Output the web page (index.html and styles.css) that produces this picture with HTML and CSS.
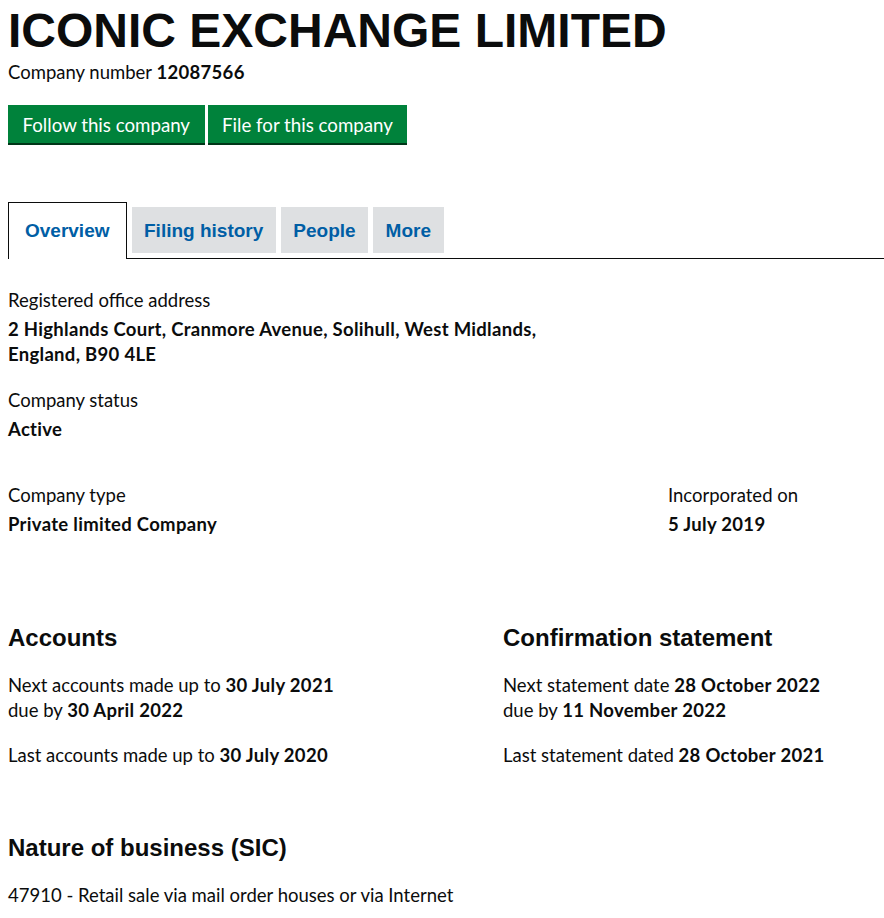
FILE: index.html
```html
<!DOCTYPE html>
<html lang="en">
<head>
<meta charset="utf-8">
<title>ICONIC EXCHANGE LIMITED - Overview</title>
<link rel="stylesheet" href="styles.css">
</head>
<body>
<main class="page">
  <h1 class="title">ICONIC EXCHANGE LIMITED</h1>
  <p class="company-number">Company number <strong>12087566</strong></p>
  <div class="actions">
    <a class="button" href="#">Follow this company</a>
    <a class="button" href="#">File for this company</a>
  </div>

  <nav class="tabs">
    <ul class="tab-list">
      <li class="tab tab-active"><a href="#">Overview</a></li>
      <li class="tab"><a href="#">Filing history</a></li>
      <li class="tab"><a href="#">People</a></li>
      <li class="tab"><a href="#">More</a></li>
    </ul>
  </nav>

  <dl class="facts">
    <dt class="label">Registered office address</dt>
    <dd class="value value-address">2 Highlands Court, Cranmore Avenue, Solihull, West Midlands, England, B90 4LE</dd>
    <dt class="label label-gap">Company status</dt>
    <dd class="value">Active</dd>
  </dl>

  <div class="row row-type">
    <dl class="facts">
      <dt class="label">Company type</dt>
      <dd class="value">Private limited Company</dd>
    </dl>
    <dl class="facts">
      <dt class="label">Incorporated on</dt>
      <dd class="value">5 July 2019</dd>
    </dl>
  </div>

  <div class="row row-dates">
    <section>
      <h2 class="heading">Accounts</h2>
      <p class="text">Next accounts made up to <strong>30 July 2021</strong><br>due by <strong>30 April 2022</strong></p>
      <p class="text text-gap">Last accounts made up to <strong>30 July 2020</strong></p>
    </section>
    <section>
      <h2 class="heading">Confirmation statement</h2>
      <p class="text">Next statement date <strong>28 October 2022</strong><br>due by <strong>11 November 2022</strong></p>
      <p class="text text-gap">Last statement dated <strong>28 October 2021</strong></p>
    </section>
  </div>

  <section class="sic">
    <h2 class="heading">Nature of business (SIC)</h2>
    <p class="text">47910 - Retail sale via mail order houses or via Internet</p>
  </section>
</main>
</body>
</html>
```

FILE: styles.css
```css
* { box-sizing: border-box; }

html, body {
  margin: 0;
  background: #ffffff;
}

body {
  font-family: Lato, "Noto Sans", sans-serif;
  font-size: 18.5px;
  line-height: 25px;
  color: #0b0c0c;
}

.page {
  padding: 4px 8px 0 8px;
}

strong {
  font-weight: 700;
  letter-spacing: 0.3px;
}

.title {
  margin: 0;
  font-family: "Liberation Sans", Arial, sans-serif;
  font-weight: 700;
  font-size: 48px;
  line-height: 54px;
  color: #0b0c0c;
}

.company-number {
  margin: 2px 0 0 0;
}

.actions {
  display: flex;
  gap: 3px;
  margin-top: 20px;
}

.button {
  display: block;
  height: 38px;
  padding: 2px 14.5px 0 14.5px;
  line-height: 36px;
  font-size: 18.7px;
  background: #00823b;
  color: #ffffff;
  text-decoration: none;
  box-shadow: 0 2px 0 #003618;
}

.tabs {
  margin-top: 59px;
  margin-right: -8px;
}

.tab-list {
  list-style: none;
  margin: 0;
  padding: 0;
  display: flex;
  align-items: flex-end;
  gap: 5px;
  border-bottom: 1px solid #0b0c0c;
}

.tab {
  background: #dee0e2;
  height: 46px;
  margin-bottom: 5px;
  padding: 2px 12.5px 0 12.5px;
}

.tab a {
  display: block;
  font-family: "Liberation Sans", Arial, sans-serif;
  font-weight: 700;
  font-size: 19px;
  line-height: 44px;
  color: #005ea5;
  text-decoration: none;
}

.tab-active {
  background: #ffffff;
  height: 57px;
  margin-bottom: -1px;
  padding: 6px 16px 6px 16px;
  border: 1px solid #0b0c0c;
  border-bottom: 0;
}

.facts {
  margin: 0;
}

.page > .facts {
  margin-top: 29px;
}

.label {
  margin: 0;
}

.value {
  margin: 4px 0 0 0;
  font-weight: 700;
  letter-spacing: 0.3px;
}

.value-address {
  max-width: 560px;
}

.label-gap {
  margin-top: 21px;
}

.row {
  display: grid;
}

.row-type {
  grid-template-columns: 660px 1fr;
  margin-top: 41px;
}

.row-dates {
  grid-template-columns: 495px 1fr;
  margin-top: 86px;
}

.heading {
  margin: 0;
  font-family: "Liberation Sans", Arial, sans-serif;
  font-weight: 700;
  font-size: 24px;
  line-height: 30px;
  color: #0b0c0c;
}

.text {
  margin: 20px 0 0 0;
}

.text-gap {
  margin-top: 20px;
}

.sic {
  margin-top: 65px;
}
```
